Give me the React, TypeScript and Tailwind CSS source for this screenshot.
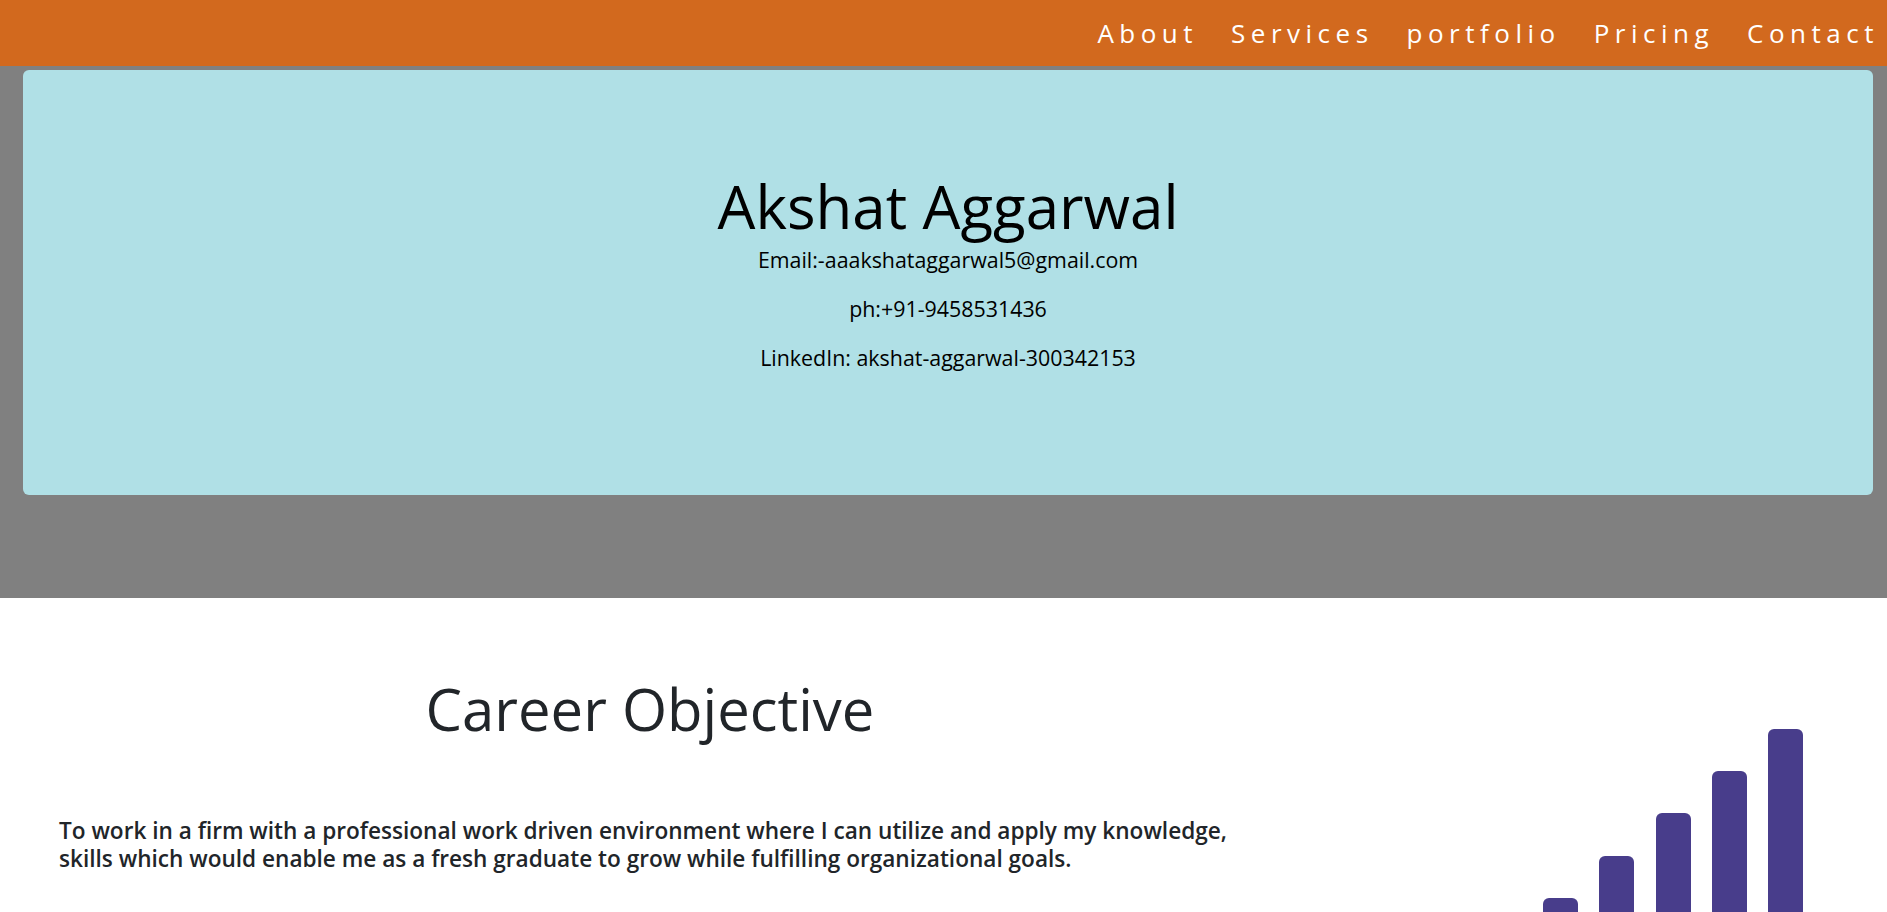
import React from "react";

const font = { fontFamily: '"Open Sans", "Noto Sans", sans-serif' };

export default function App() {
  const bars = [
    { x: 0, top: 169 },
    { x: 56, top: 127 },
    { x: 113, top: 84 },
    { x: 169, top: 42 },
    { x: 225, top: 0 },
  ];
  return (
    <div className="w-[1887px] min-h-[912px] bg-white overflow-hidden" style={font}>
      <nav className="h-[66px] bg-[#d2691e] flex items-center justify-end pr-[8px]">
        <ul className="flex items-center gap-[33px] text-white text-[26px] tracking-[5.5px] leading-none">
          <li>About</li>
          <li>Services</li>
          <li>portfolio</li>
          <li>Pricing</li>
          <li>Contact</li>
        </ul>
      </nav>
      <section className="bg-[#808080] pt-[4px] pb-[103px] pl-[23px] pr-[14px]">
        <div className="h-[425px] rounded-[6px] bg-[#b0e0e6] flex flex-col items-center pt-[100px] text-black">
          <h1 className="text-[60px] leading-[1.2] font-normal">Akshat Aggarwal</h1>
          <p className="text-[21.4px] leading-[30px] mt-[3px]">Email:-aaakshataggarwal5@gmail.com</p>
          <p className="text-[21.4px] leading-[30px] mt-[19px]">ph:+91-9458531436</p>
          <p className="text-[21.4px] leading-[30px] mt-[19px]">LinkedIn: akshat-aggarwal-300342153</p>
        </div>
      </section>
      <section className="flex h-[314px]">
        <div className="w-[1300px] pl-[59px] pt-[76px]">
          <h2 className="text-[58px] leading-[1.2] text-[#212529] text-center w-[1182px]">Career Objective</h2>
          <p className="mt-[73px] w-[1195px] text-[22.6px] leading-[28px] font-semibold text-[#212529]">
            To work in a firm with a professional work driven environment where I can utilize and apply my knowledge, skills which would enable me as a fresh graduate to grow while fulfilling organizational goals.
          </p>
        </div>
        <div className="flex-1 pl-[243px] pt-[131px]">
          <svg width="270" height="260" viewBox="0 0 270 260">
            {bars.map((b, i) => (
              <rect key={i} x={b.x} y={b.top} width="35" height={300 - b.top} rx="6" fill="#483d8b" />
            ))}
          </svg>
        </div>
      </section>
    </div>
  );
}
